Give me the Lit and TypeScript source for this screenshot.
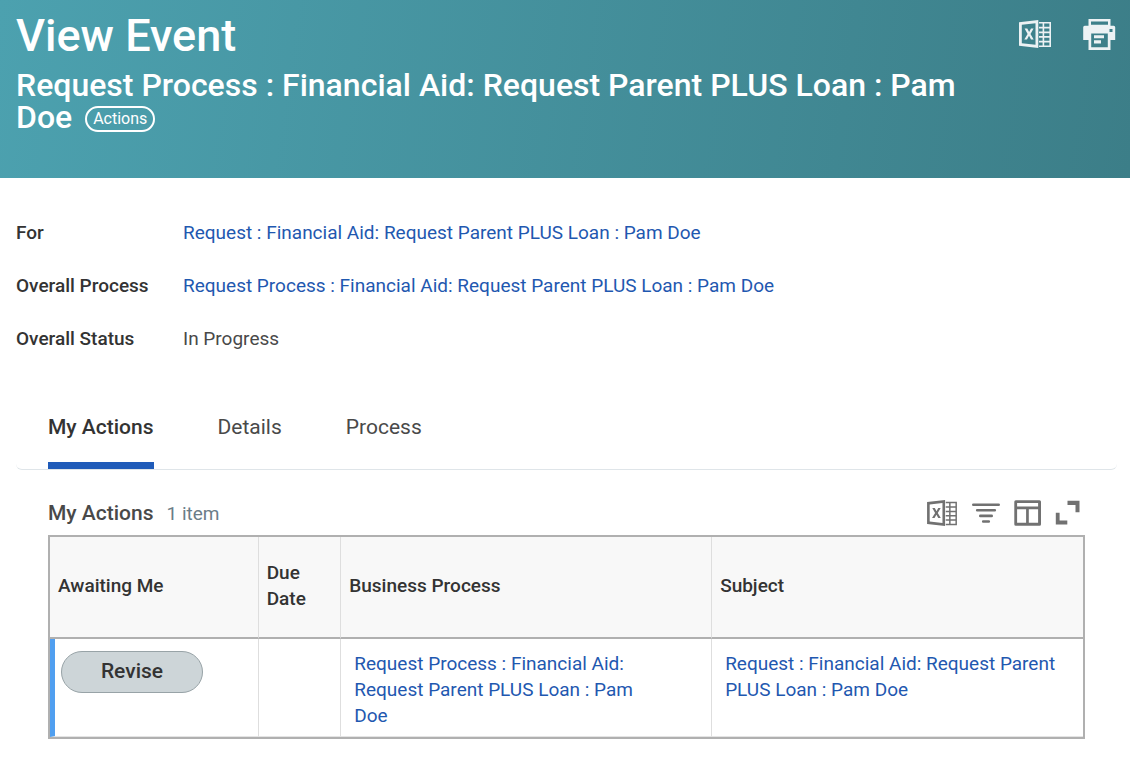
import { LitElement, html, css } from "lit";
import { customElement, state } from "lit/decorators.js";
import { classMap } from "lit/directives/class-map.js";

const excelIcon = html`<svg class="icon excel" viewBox="0 0 34 30" aria-hidden="true">
  <path fill="currentColor" fill-rule="evenodd" d="M1 3.3 20.3 1v28L1 26.7zM3.8 5.8v18.4l13.7 1.5V4.3z" />
  <path fill="currentColor" d="M6.6 9.6h2.7l1.8 3.5 1.9-3.5h2.6l-3.1 5.3 3.2 5.5H13l-2-3.6-2 3.6H6.3l3.3-5.5z" />
  <path fill="currentColor" fill-rule="evenodd" d="M21 3h12v25H21zM21 4.6v3.2h3.6V4.6zM26.2 4.6v3.2h5.2V4.6zM21 9.4v3.2h3.6V9.4zM26.2 9.4v3.2h5.2V9.4zM21 14.2v2.9h3.6v-2.9zM26.2 14.2v2.9h5.2v-2.9zM21 18.7v3.1h3.6v-3.1zM26.2 18.7v3.1h5.2v-3.1zM21 23.4v3h3.6v-3zM26.2 23.4v3h5.2v-3z" />
</svg>`;

const printIcon = html`<svg class="icon" viewBox="0 0 34 34" width="34" height="34" aria-hidden="true">
  <path fill="currentColor" fill-rule="evenodd" d="M6.5 2h22v6.700h3.200a1.500 1.500 0 0 1 1.500 1.500V23h-4.700v10h-22V23H1.200V10.200a1.500 1.500 0 0 1 1.500-1.500h3.800zM9 4.600v3.200h17V4.600zM9.200 16.500v13.800h16.600V16.500zM27.500 12v3h3v-3z" />
  <path fill="currentColor" d="M12 18.200h10v3H12zM12 23.200h7v3.200h-7z" />
</svg>`;

const filterIcon = html`<svg class="icon" viewBox="0 0 30 26" width="30" height="26" aria-hidden="true">
  <path stroke="currentColor" stroke-width="2.6" stroke-linecap="round" fill="none" d="M2.300 4.700h25.400M6.200 10.300h17.600M9.300 15.900h11.400M12.200 21.500h5.600" />
</svg>`;

const columnsIcon = html`<svg class="icon" viewBox="0 0 28 26" width="28" height="26" aria-hidden="true">
  <path fill="currentColor" fill-rule="evenodd" d="M1.800.3h23.700A1.500 1.500 0 0 1 27 1.800v22.400a1.500 1.500 0 0 1-1.500 1.500H1.800a1.500 1.500 0 0 1-1.500-1.500V1.800A1.500 1.500 0 0 1 1.800.3zM3.100 3v3.500h21V3zM3.100 9.200v13.600h9V9.200zM14.800 9.200v13.600h9.300V9.200z" />
</svg>`;

const expandIcon = html`<svg class="icon" viewBox="0 0 26 26" width="26" height="26" aria-hidden="true">
  <path fill="currentColor" d="M12.500.8h12v11.500h-4V5h-8zM.8 12.700h3.800v7.800h7.700v4H.8z" />
</svg>`;

interface Fact {
  label: string;
  value: string;
  link: boolean;
}

const REQUEST = "Request : Financial Aid: Request Parent PLUS Loan : Pam Doe";
const REQUEST_PROCESS = "Request Process : Financial Aid: Request Parent PLUS Loan : Pam Doe";

const FACTS: Fact[] = [
  { label: "For", value: REQUEST, link: true },
  { label: "Overall Process", value: REQUEST_PROCESS, link: true },
  { label: "Overall Status", value: "In Progress", link: false },
];

const TABS = ["My Actions", "Details", "Process"];

@customElement("app-root")
export class AppRoot extends LitElement {
  static styles = css`
    :host {
      display: block;
      font-family: Roboto, "Liberation Sans", sans-serif;
      font-size: 19px;
      line-height: 26px;
      color: #494949;
      background: #fff;
    }
    button {
      font: inherit;
      color: inherit;
      background: none;
      border: 0;
      padding: 0;
      cursor: pointer;
    }
    a {
      color: #1f58b0;
      text-decoration: none;
    }
    a:hover {
      text-decoration: underline;
    }
    .icon {
      display: block;
    }
    .excel {
      width: 34px;
      height: 30px;
    }
    .banner {
      display: flex;
      justify-content: space-between;
      align-items: flex-start;
      gap: 40px;
      padding: 10px 14px 45px 16px;
      color: #fff;
      background: linear-gradient(98deg, #4ca1af, #3c7e88);
    }
    .title {
      margin: 0 0 7px;
      font-size: 45px;
      line-height: 52px;
      font-weight: 500;
    }
    .subtitle {
      margin: 0;
      font-size: 32px;
      line-height: 32px;
      font-weight: 500;
    }
    .related {
      vertical-align: 4px;
      margin-left: 5px;
      padding: 0 6px;
      border: 2px solid #fff;
      border-radius: 13px;
      font-size: 16px;
      line-height: 22px;
      font-weight: 400;
    }
    .banner-tools {
      display: flex;
      align-items: center;
      gap: 30px;
      padding-top: 7px;
      color: #ecf2f4;
    }
    .facts {
      display: grid;
      grid-template-columns: minmax(135px, max-content) 1fr;
      gap: 27px 32px;
      margin: 0;
      padding: 42px 16px 48px;
    }
    .fact-label {
      color: #333;
      font-weight: 500;
    }
    .fact-value {
      margin: 0;
    }
    .tabs {
      display: flex;
      gap: 64px;
      margin: 0 13px 0 16px;
      padding: 0 32px;
      border-bottom: 1px solid #dfe5e9;
      border-radius: 0 0 6px 6px;
    }
    .tab {
      padding: 14px 0 22px;
      border-bottom: 7px solid transparent;
      font-size: 21px;
    }
    .tab.active {
      color: #333;
      font-weight: 500;
      border-bottom-color: #1f5bb9;
    }
    .panel {
      padding: 28px 45px 28px 48px;
    }
    .panel-head {
      display: flex;
      align-items: center;
      justify-content: space-between;
      height: 30px;
      margin-bottom: 7px;
    }
    .panel-title {
      display: flex;
      gap: 13px;
      align-items: baseline;
    }
    .panel-name {
      margin: 0;
      font-size: 21px;
      font-weight: 500;
    }
    .panel-count {
      color: #6b7d88;
    }
    .grid-tools {
      display: flex;
      align-items: center;
      gap: 13px;
      padding-right: 4px;
      color: #717171;
    }
    .grid-tools .excel {
      width: 32px;
      height: 28px;
    }
    .grid {
      width: 100%;
      table-layout: fixed;
      border-collapse: separate;
      border-spacing: 0;
      border: 2px solid #b0b0b0;
    }
    .col-awaiting {
      width: 20.2%;
    }
    .col-due {
      width: 8%;
    }
    .col-process {
      width: 35.9%;
    }
    .grid th {
      height: 102px;
      padding: 0 8px 2px;
      color: #333;
      background: #f8f8f8;
      border-bottom: 2px solid #b0b0b0;
      box-sizing: border-box;
      font-weight: 500;
      text-align: left;
    }
    .grid td {
      padding: 12px 60px 7px 13px;
      border-bottom: 1px solid #e4e4e4;
      vertical-align: top;
    }
    .grid td:last-child {
      padding-right: 12px;
    }
    .grid th:not(:last-child),
    .grid td:not(:last-child) {
      border-right: 1px solid #dedede;
    }
    .grid .awaiting {
      padding-left: 6px;
      padding-right: 6px;
      border-left: 5px solid #509ff0;
    }
    .revise {
      display: block;
      min-width: 142px;
      padding: 6px 24px 8px;
      border: 1px solid #98a3a7;
      border-radius: 21px;
      background: #cdd5d8;
      color: #333;
      font-size: 21px;
      font-weight: 500;
    }
  `;

  @state() private activeTab = 0;

  render() {
    return html`
      <header class="banner">
        <div>
          <h1 class="title">View Event</h1>
          <h2 class="subtitle">
            <span>${REQUEST_PROCESS}</span>
            <button class="related">Actions</button>
          </h2>
        </div>
        <div class="banner-tools">
          <button aria-label="Export to Excel">${excelIcon}</button>
          <button aria-label="Print">${printIcon}</button>
        </div>
      </header>
      <main>
        <dl class="facts">
          ${FACTS.map(
            (f) => html`<dt class="fact-label">${f.label}</dt>
              <dd class="fact-value">${f.link ? html`<a href="#">${f.value}</a>` : f.value}</dd>`
          )}
        </dl>
        <div class="tabs" role="tablist">
          ${TABS.map(
            (name, i) => html`<button
              role="tab"
              aria-selected=${i === this.activeTab}
              class=${classMap({ tab: true, active: i === this.activeTab })}
              @click=${() => (this.activeTab = i)}
            >${name}</button>`
          )}
        </div>
        <section class="panel">
          <div class="panel-head">
            <div class="panel-title">
              <h3 class="panel-name">My Actions</h3>
              <span class="panel-count">1 item</span>
            </div>
            <div class="grid-tools">
              <button aria-label="Export to Excel">${excelIcon}</button>
              <button aria-label="Filter">${filterIcon}</button>
              <button aria-label="Choose columns">${columnsIcon}</button>
              <button aria-label="Expand">${expandIcon}</button>
            </div>
          </div>
          <table class="grid">
            <colgroup>
              <col class="col-awaiting" />
              <col class="col-due" />
              <col class="col-process" />
              <col />
            </colgroup>
            <thead>
              <tr>
                <th scope="col">Awaiting Me</th>
                <th scope="col">Due Date</th>
                <th scope="col">Business Process</th>
                <th scope="col">Subject</th>
              </tr>
            </thead>
            <tbody>
              <tr>
                <td class="awaiting"><button class="revise">Revise</button></td>
                <td></td>
                <td><a href="#">${REQUEST_PROCESS}</a></td>
                <td><a href="#">${REQUEST}</a></td>
              </tr>
            </tbody>
          </table>
        </section>
      </main>
    `;
  }
}
